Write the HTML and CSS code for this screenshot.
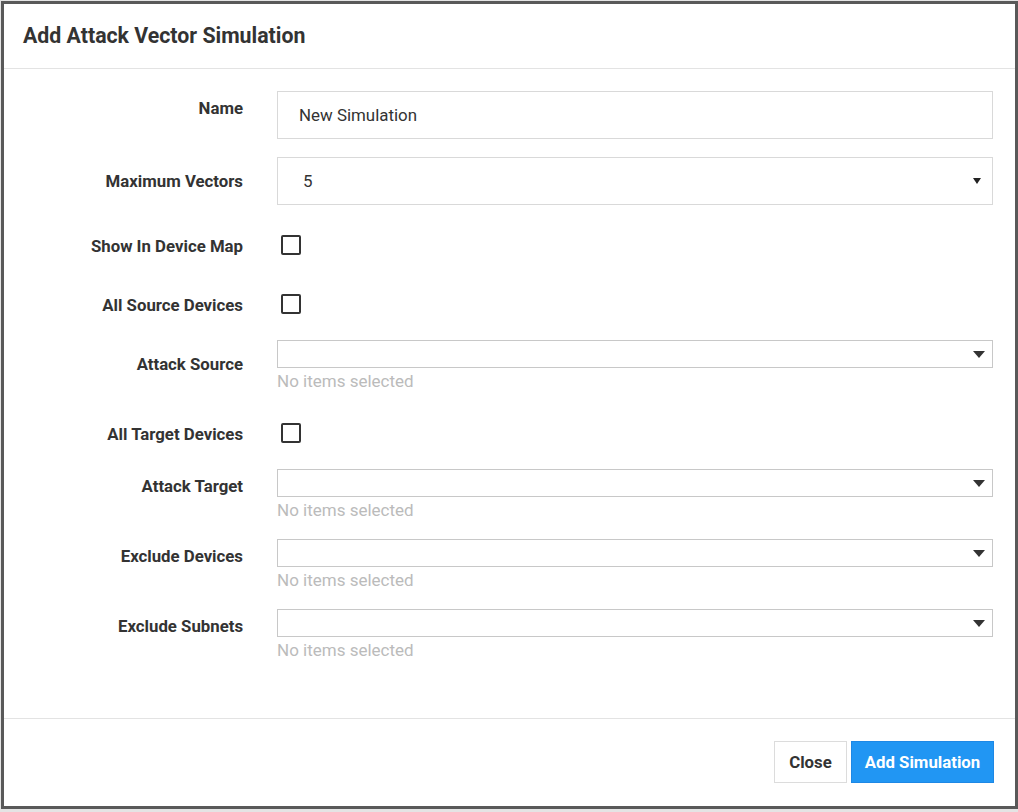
FILE: index.html
```html
<!DOCTYPE html>
<html>
<head>
<meta charset="utf-8">
<link rel="stylesheet" href="styles.css">
</head>
<body>
<div class="dialog">
  <div class="dialog-header">
    <h1 class="dialog-title">Add Attack Vector Simulation</h1>
  </div>
  <div class="dialog-body">
    <div class="row row-text">
      <div class="label">Name</div>
      <div class="control"><div class="text-input">New Simulation</div></div>
    </div>
    <div class="row row-select">
      <div class="label">Maximum Vectors</div>
      <div class="control">
        <div class="select-input"><span class="select-value">5</span><svg class="small-caret" width="8" height="6" viewBox="0 0 8 6"><path d="M0 0 H8 L4 6 Z" fill="#222"/></svg></div>
      </div>
    </div>
    <div class="row row-check row-check-first">
      <div class="label">Show In Device Map</div>
      <div class="control"><span class="checkbox"></span></div>
    </div>
    <div class="row row-check row-check-second">
      <div class="label">All Source Devices</div>
      <div class="control"><span class="checkbox"></span></div>
    </div>
    <div class="row row-multi row-multi-low">
      <div class="label">Attack Source</div>
      <div class="control">
        <div class="multi-input"><svg class="caret" width="12" height="7" viewBox="0 0 12 7"><path d="M0 0 H12 L6 7 Z" fill="#333"/></svg></div>
        <div class="helper">No items selected</div>
      </div>
    </div>
    <div class="row row-check row-check-third">
      <div class="label">All Target Devices</div>
      <div class="control"><span class="checkbox"></span></div>
    </div>
    <div class="row row-multi row-multi-after-check">
      <div class="label">Attack Target</div>
      <div class="control">
        <div class="multi-input"><svg class="caret" width="12" height="7" viewBox="0 0 12 7"><path d="M0 0 H12 L6 7 Z" fill="#333"/></svg></div>
        <div class="helper">No items selected</div>
      </div>
    </div>
    <div class="row row-multi">
      <div class="label">Exclude Devices</div>
      <div class="control">
        <div class="multi-input"><svg class="caret" width="12" height="7" viewBox="0 0 12 7"><path d="M0 0 H12 L6 7 Z" fill="#333"/></svg></div>
        <div class="helper">No items selected</div>
      </div>
    </div>
    <div class="row row-multi">
      <div class="label">Exclude Subnets</div>
      <div class="control">
        <div class="multi-input"><svg class="caret" width="12" height="7" viewBox="0 0 12 7"><path d="M0 0 H12 L6 7 Z" fill="#333"/></svg></div>
        <div class="helper">No items selected</div>
      </div>
    </div>
  </div>
  <div class="dialog-footer">
    <button class="btn btn-default">Close</button>
    <button class="btn btn-primary">Add Simulation</button>
  </div>
</div>
</body>
</html>
```

FILE: styles.css
```css
* { box-sizing: border-box; }
html, body { margin: 0; padding: 0; }
body {
  background: #e4e4e4;
  font-family: Roboto, "Liberation Sans", Arial, sans-serif;
  color: #333;
  width: 1018px;
  height: 812px;
  overflow: hidden;
  padding: 1px 0 0 1px;
}
.dialog {
  width: 1017px;
  height: 808px;
  background: #fff;
  border: 3px solid #595959;
  display: flex;
  flex-direction: column;
}
.dialog-header {
  height: 65px;
  border-bottom: 1px solid #e3e3e3;
  display: flex;
  align-items: center;
  padding: 0 19px;
}
.dialog-title {
  margin: 0;
  font-size: 21.3px;
  font-weight: 700;
  color: #333;
  line-height: 24px;
}
.dialog-body {
  flex: 1;
  padding: 22px 21px 0 0;
}
.row {
  display: grid;
  grid-template-columns: 239px 716px;
  column-gap: 34px;
  align-items: start;
  margin-top: 18px;
}
.row:first-child { margin-top: 0; }
.label {
  text-align: right;
  font-weight: 700;
  font-size: 16.8px;
  line-height: 22px;
  color: #333;
}
.row-text .label { padding-top: 6px; }
.row-select .label { padding-top: 13px; }
.row-check { margin-top: 30px; }
.row-check-second { margin-top: 37px; }
.row-check-third { margin-top: 31px; }
.row-multi-low { margin-top: 24px; }
.row-multi-after-check { margin-top: 24px; }
.row-multi .label { padding-top: 6px; }
.row-multi-low.row-multi .label { padding-top: 13px; }

.text-input {
  height: 48px;
  border: 1px solid #d9d9d9;
  padding: 0 21px;
  display: flex;
  align-items: center;
  font-size: 16.9px;
  color: #333;
}
.select-input {
  height: 48px;
  border: 1px solid #d9d9d9;
  padding: 0 11px 0 25px;
  display: flex;
  align-items: center;
  justify-content: space-between;
  font-size: 16.9px;
  color: #333;
}
.small-caret { display: block; }
.checkbox {
  display: block;
  width: 20px;
  height: 20px;
  margin-left: 4px;
  border: 2px solid #333;
  border-radius: 2px;
  background: #fff;
}
.multi-input {
  height: 28px;
  border: 1px solid #c8c8c8;
  display: flex;
  align-items: center;
  justify-content: flex-end;
  padding-right: 7px;
}
.caret { display: block; }
.helper {
  margin-top: 2px;
  font-size: 17px;
  line-height: 22px;
  color: #bbb;
}
.dialog-footer {
  height: 88px;
  border-top: 1px solid #e3e3e3;
  display: flex;
  justify-content: flex-end;
  align-items: flex-start;
  padding: 22px 21px 0 0;
  gap: 4px;
}
.btn {
  height: 42px;
  font-family: Roboto, "Liberation Sans", Arial, sans-serif;
  font-size: 16.8px;
  font-weight: 700;
  padding: 0;
  border-radius: 0;
  white-space: nowrap;
  cursor: pointer;
}
.btn-default {
  width: 73px;
  background: #fff;
  color: #333;
  border: 1px solid #dcdcdc;
}
.btn-primary {
  width: 143px;
  background: #2196f3;
  color: #fff;
  border: 1px solid #1e88e5;
}
```
